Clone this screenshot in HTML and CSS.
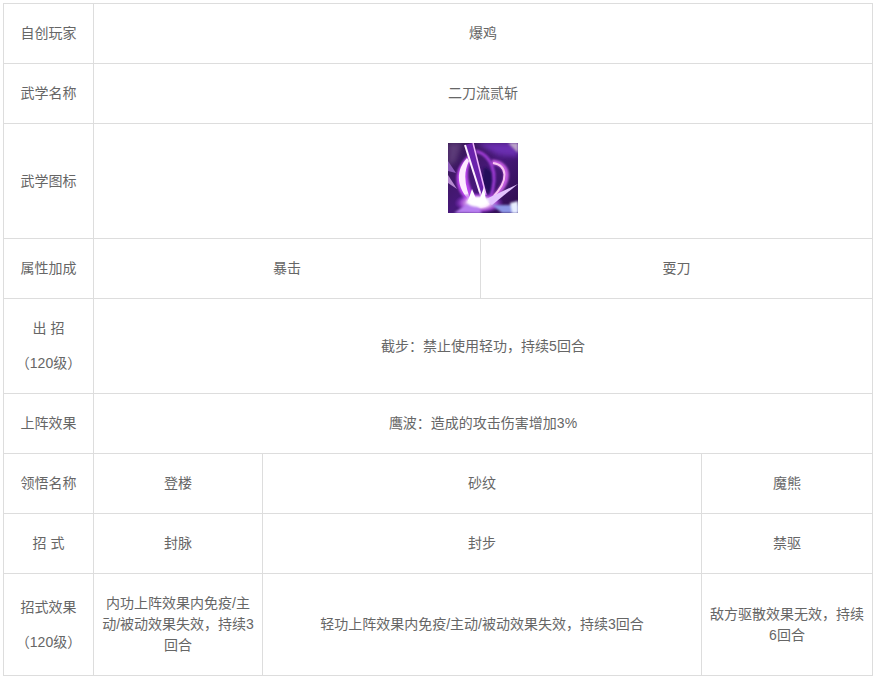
FILE: index.html
```html
<!DOCTYPE html>
<html lang="zh-CN">
<head>
<meta charset="utf-8">
<title>二刀流贰斩</title>
<link rel="stylesheet" href="styles.css">
</head>
<body>
<table class="skill-table">
  <colgroup>
    <col class="c1"><col class="c2"><col class="c3"><col class="c4"><col class="c5">
  </colgroup>
  <tbody>
    <tr><td>自创玩家</td><td colspan="4">爆鸡</td></tr>
    <tr><td>武学名称</td><td colspan="4">二刀流贰斩</td></tr>
    <tr>
      <td>武学图标</td>
      <td colspan="4">
        <svg class="skill-icon" width="70" height="70" viewBox="0 0 70 70" role="img" aria-label="武学图标">
          <defs>
            <linearGradient id="bg" x1="0" y1="0" x2="1" y2="1">
              <stop offset="0" stop-color="#35184f"/>
              <stop offset="0.5" stop-color="#47187a"/>
              <stop offset="1" stop-color="#2c0d4a"/>
            </linearGradient>
            <radialGradient id="glow" cx="0.5" cy="0.5" r="0.5">
              <stop offset="0" stop-color="#ffffff"/>
              <stop offset="0.4" stop-color="#fbe0ff"/>
              <stop offset="0.72" stop-color="#c05cf0" stop-opacity="0.7"/>
              <stop offset="1" stop-color="#7a20c0" stop-opacity="0"/>
            </radialGradient>
            <filter id="b0" x="-30%" y="-30%" width="160%" height="160%"><feGaussianBlur stdDeviation="0.4"/></filter>
            <filter id="b1" x="-30%" y="-30%" width="160%" height="160%"><feGaussianBlur stdDeviation="1"/></filter>
            <filter id="b2" x="-30%" y="-30%" width="160%" height="160%"><feGaussianBlur stdDeviation="2.6"/></filter>
          </defs>
          <rect width="70" height="70" fill="url(#bg)"/>
          <path d="M0 0H14L8 18 0 24Z" fill="#5c3a78" filter="url(#b2)"/>
          <path d="M28 0H70V14L50 12Z" fill="#6a2fb0" filter="url(#b2)"/>
          <path d="M60 0H70V10Z" fill="#b9a2c8" filter="url(#b1)"/>
          <path d="M0 32L9 46 0 40Z" fill="#b68ad0" filter="url(#b0)"/>
          <path d="M0 18L8 30 0 28Z" fill="#8a5ab8" filter="url(#b0)"/>
          <path d="M36 24C48 28 50 42 42 52L34 40Z" fill="#24115a" filter="url(#b1)"/>
          <path d="M21 12C4 26 4 48 24 62L34 60C20 48 16 30 24 16Z" fill="#b844ea" filter="url(#b1)"/>
          <path d="M19 15C7 28 8 46 24 60C18 46 14 32 21 18Z" fill="#fdeaff" filter="url(#b0)"/>
          <path d="M28 8C42 12 52 28 42 56" fill="none" stroke="#a23cd8" stroke-width="3" filter="url(#b1)"/>
          <path d="M44 19C60 20 66 36 44 56" fill="none" stroke="#c35ce0" stroke-width="5" filter="url(#b1)"/>
          <path d="M45 20C59 22 62 37 44 55" fill="none" stroke="#f9c4f2" stroke-width="2" filter="url(#b0)"/>
          <path d="M17 2L24 0 38 52 33 56Z" fill="#6a20ac" filter="url(#b0)"/>
          <path d="M17 2L34 56" fill="none" stroke="#fff0ff" stroke-width="2" filter="url(#b0)"/>
          <path d="M25 0L38 52" fill="none" stroke="#f0b4ff" stroke-width="1.5" filter="url(#b0)"/>
          <ellipse cx="31" cy="60" rx="25" ry="11" fill="url(#glow)"/>
          <path d="M36 57L70 41 44 62Z" fill="#e3c4ff" filter="url(#b0)"/>
          <path d="M24 46L29 58 20 58Z" fill="#fff" filter="url(#b0)"/>
          <path d="M36 44L38 58 31 58Z" fill="#fff" filter="url(#b0)"/>
          <path d="M6 70L26 56 34 70Z" fill="#b880f0" filter="url(#b1)"/>
          <path d="M44 62L70 62 70 70 54 70Z" fill="#8c96e6" filter="url(#b1)"/>
          <path d="M62 60L70 58 70 70 64 70Z" fill="#e8eeff" filter="url(#b1)"/>
          <ellipse cx="30" cy="59" rx="11" ry="5" fill="#fff" filter="url(#b1)"/>
        </svg>
      </td>
    </tr>
    <tr><td>属性加成</td><td colspan="2">暴击</td><td colspan="2">耍刀</td></tr>
    <tr>
      <td><p>出 招</p><p>（120级）</p></td>
      <td colspan="4">截步：禁止使用轻功，持续5回合</td>
    </tr>
    <tr><td>上阵效果</td><td colspan="4">鹰波：造成的攻击伤害增加3%</td></tr>
    <tr><td>领悟名称</td><td>登楼</td><td colspan="2">砂纹</td><td>魔熊</td></tr>
    <tr><td>招 式</td><td>封脉</td><td colspan="2">封步</td><td>禁驱</td></tr>
    <tr>
      <td><p>招式效果</p><p>（120级）</p></td>
      <td>内功上阵效果内免疫/主动/被动效果失效，持续3回合</td>
      <td colspan="2">轻功上阵效果内免疫/主动/被动效果失效，持续3回合</td>
      <td>敌方驱散效果无效，持续6回合</td>
    </tr>
  </tbody>
</table>
</body>
</html>
```
FILE: styles.css
```css
html, body {
  background: #fff;
}
body {
  margin: 3px;
  font-family: "Liberation Sans", "Noto Sans CJK SC", sans-serif;
  font-size: 14px;
  line-height: 21px;
  color: #666;
}
.skill-table {
  width: 869px;
  table-layout: fixed;
  border-collapse: collapse;
}
.c1 { width: 90px; }
.c2 { width: 169px; }
.c3 { width: 218px; }
.c4 { width: 221px; }
.c5 { width: 171px; }
.skill-table td {
  padding: 19px 7px;
  border: 1px solid #ddd;
  text-align: center;
  vertical-align: middle;
}
.skill-table p {
  margin: 0 0 14px;
}
.skill-table p:last-child {
  margin-bottom: 0;
}
.skill-icon {
  display: inline-block;
}
```
